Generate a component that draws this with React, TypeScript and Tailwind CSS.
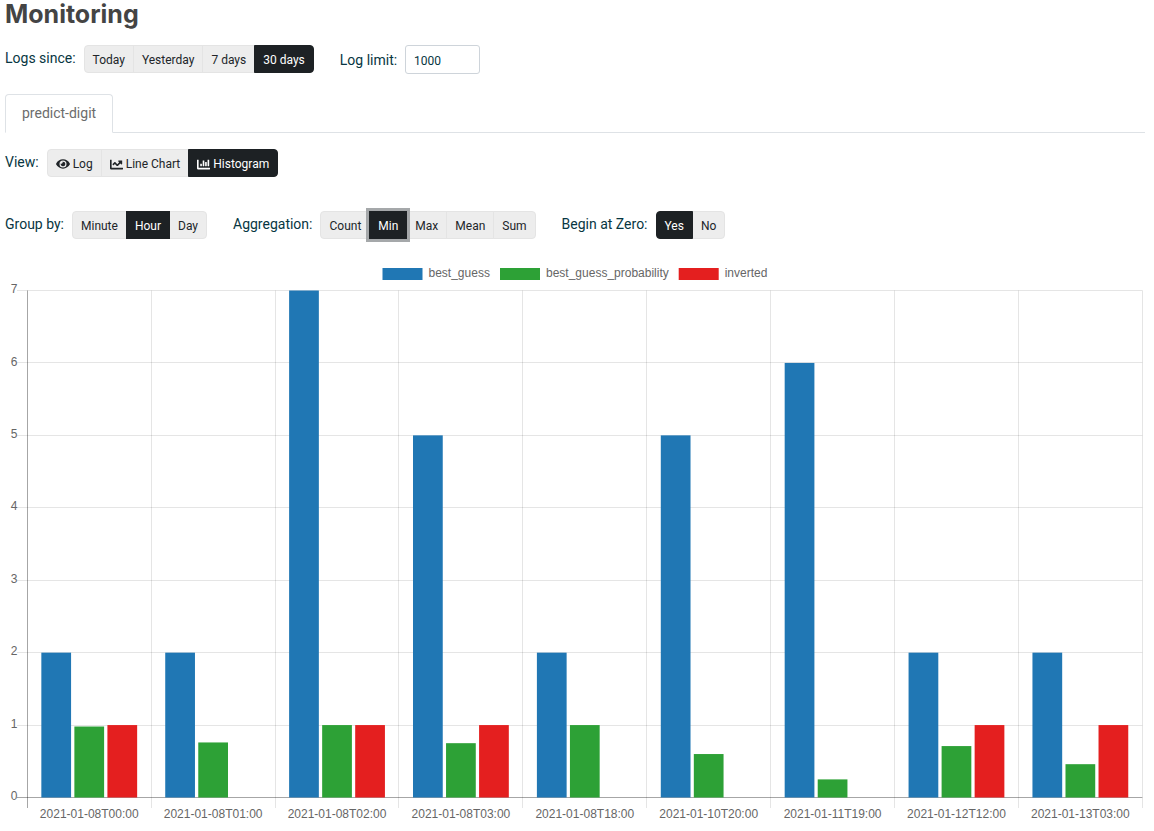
import { useState } from 'react';
import type { ReactNode } from 'react';
import { FaChartBar, FaChartLine, FaEye } from 'react-icons/fa';

interface Option {
  label: string;
  icon?: ReactNode;
}

interface ButtonGroupProps {
  label: string;
  options: Option[];
  value: string;
  autoFocus?: boolean;
  onChange: (value: string) => void;
}

const sinceOptions: Option[] = [{ label: 'Today' }, { label: 'Yesterday' }, { label: '7 days' }, { label: '30 days' }];
const viewOptions: Option[] = [
  { label: 'Log', icon: <FaEye size={14} /> },
  { label: 'Line Chart', icon: <FaChartLine size={13} /> },
  { label: 'Histogram', icon: <FaChartBar size={13} /> },
];
const groupOptions: Option[] = [{ label: 'Minute' }, { label: 'Hour' }, { label: 'Day' }];
const aggregationOptions: Option[] = [{ label: 'Count' }, { label: 'Min' }, { label: 'Max' }, { label: 'Mean' }, { label: 'Sum' }];
const zeroOptions: Option[] = [{ label: 'Yes' }, { label: 'No' }];

const series = [
  { name: 'best_guess', color: '#2077b4', legendX: 377.5 },
  { name: 'best_guess_probability', color: '#2da136', legendX: 495 },
  { name: 'inverted', color: '#e41f1f', legendX: 673.7 },
];

const rows = [
  { hour: '2021-01-08T00:00', values: [2, 0.98, 1] },
  { hour: '2021-01-08T01:00', values: [2, 0.76, 0] },
  { hour: '2021-01-08T02:00', values: [7, 1, 1] },
  { hour: '2021-01-08T03:00', values: [5, 0.75, 1] },
  { hour: '2021-01-08T18:00', values: [2, 1, 0] },
  { hour: '2021-01-10T20:00', values: [5, 0.6, 0] },
  { hour: '2021-01-11T19:00', values: [6, 0.25, 0] },
  { hour: '2021-01-12T12:00', values: [2, 0.71, 1] },
  { hour: '2021-01-13T03:00', values: [2, 0.46, 1] },
];

const ButtonGroup = ({ label, options, value, autoFocus, onChange }: ButtonGroupProps) => (
  <div className="flex items-start gap-2" role="group" aria-label={label}>
    <span className="leading-[26px]">{label}</span>
    <div className="flex">
      {options.map((option) => (
        <button
          key={option.label}
          type="button"
          autoFocus={autoFocus && option.label === value}
          aria-pressed={option.label === value}
          onClick={() => onChange(option.label)}
          className={
            'relative -ml-px flex h-7 items-center gap-[3px] border px-2 pt-0.5 text-[12px] first:ml-0 first:rounded-l last:rounded-r focus:outline-3 focus:outline-[#a5a8aa] ' +
            (option.label === value ? 'z-10 border-[#1d2124] bg-[#1d2124] text-white' : 'border-[#e4e4e4] bg-[#ededed] text-[#212529]')
          }
        >
          {option.icon}
          {option.label}
        </button>
      ))}
    </div>
  </div>
);

const Histogram = () => {
  const left = 22.3;
  const right = 1137.3;
  const top = 33.5;
  const bottom = 540.5;
  const column = (right - left) / rows.length;
  const slot = (column * 0.8) / series.length;
  const yFor = (value: number) => bottom - (value / 7) * (bottom - top);
  // keeps one-pixel lines crisp
  const snap = (value: number) => Math.floor(value) + 0.5;

  return (
    <svg viewBox="0 0 1140 570" className="block h-auto w-full" fontFamily="Liberation Sans, Arial, sans-serif" fontSize="12" fill="#666" role="img" aria-label="Histogram">
      {series.map((item) => (
        <g key={item.name}>
          <rect x={item.legendX} y="11" width="40" height="12" fill={item.color} />
          <text x={item.legendX + 46} y="20">{item.name}</text>
        </g>
      ))}

      {[1, 2, 3, 4, 5, 6, 7].map((tick) => (
        <line key={tick} x1="12" x2={right} y1={snap(yFor(tick))} y2={snap(yFor(tick))} stroke="#000" strokeOpacity="0.1" />
      ))}
      {[0, 1, 2, 3, 4, 5, 6, 7].map((tick) => (
        <text key={tick} x="12.5" y={Math.round(yFor(tick) - 0.3) + 3} textAnchor="end">{tick}</text>
      ))}
      {rows.map((row, i) => (
        <line key={row.hour} x1={snap(left + column * (i + 1))} x2={snap(left + column * (i + 1))} y1={top} y2="551" stroke="#000" strokeOpacity="0.1" />
      ))}
      <path d={`M${snap(left)} ${top}V551M12 ${bottom}H${right}`} fill="none" stroke="#000" strokeOpacity="0.35" />

      {rows.map((row, i) => (
        <g key={row.hour}>
          {row.values.map((value, j) => (
            <rect
              key={series[j].name}
              x={left + column * (i + 0.1) + slot * (j + 0.05)}
              y={yFor(value)}
              width={slot * 0.9}
              height={bottom - yFor(value)}
              fill={series[j].color}
            />
          ))}
          <text x={left + column * (i + 0.5)} y="561" textAnchor="middle">{row.hour}</text>
        </g>
      ))}
    </svg>
  );
};

const App = () => {
  const [since, setSince] = useState('30 days');
  const [limit, setLimit] = useState('1000');
  const [view, setView] = useState('Histogram');
  const [group, setGroup] = useState('Hour');
  const [aggregation, setAggregation] = useState('Min');
  const [zero, setZero] = useState('Yes');

  return (
    <main className="bg-white pl-[5px] pr-[9px] font-[Roboto,sans-serif] text-[14px] text-[#073642]">
      <h1 className="font-[Inter,sans-serif] text-[25px] font-bold leading-7 text-[#444]">Monitoring</h1>

      <div className="mt-[17px] flex flex-wrap items-start gap-[26px]">
        <ButtonGroup label="Logs since:" options={sinceOptions} value={since} onChange={setSince} />
        <div className="flex items-center gap-2">
          <label htmlFor="limit" className="pt-0.5">Log limit:</label>
          <input
            id="limit"
            type="text"
            value={limit}
            onChange={(e) => setLimit(e.target.value)}
            className="h-[29px] w-[75px] rounded-[3px] border border-[#ced4da] px-2 pt-0.5 text-[12px]"
          />
        </div>
      </div>

      <nav className="mt-5 flex border-b border-[#dee2e6]">
        <a href="#predict-digit" className="-mb-px rounded-t border border-b-white border-[#dee2e6] bg-white px-4 py-2 leading-[21px] text-[#6c6c6c]">
          predict-digit
        </a>
      </nav>

      <div className="mt-4">
        <ButtonGroup label="View:" options={viewOptions} value={view} onChange={setView} />
      </div>

      <div className="mt-[34px] flex flex-wrap gap-[26px]">
        <ButtonGroup label="Group by:" options={groupOptions} value={group} onChange={setGroup} />
        <ButtonGroup label="Aggregation:" options={aggregationOptions} value={aggregation} autoFocus onChange={setAggregation} />
        <ButtonGroup label="Begin at Zero:" options={zeroOptions} value={zero} onChange={setZero} />
      </div>

      <section className="mt-[18px]">
        <Histogram />
      </section>
    </main>
  );
};

export default App;
